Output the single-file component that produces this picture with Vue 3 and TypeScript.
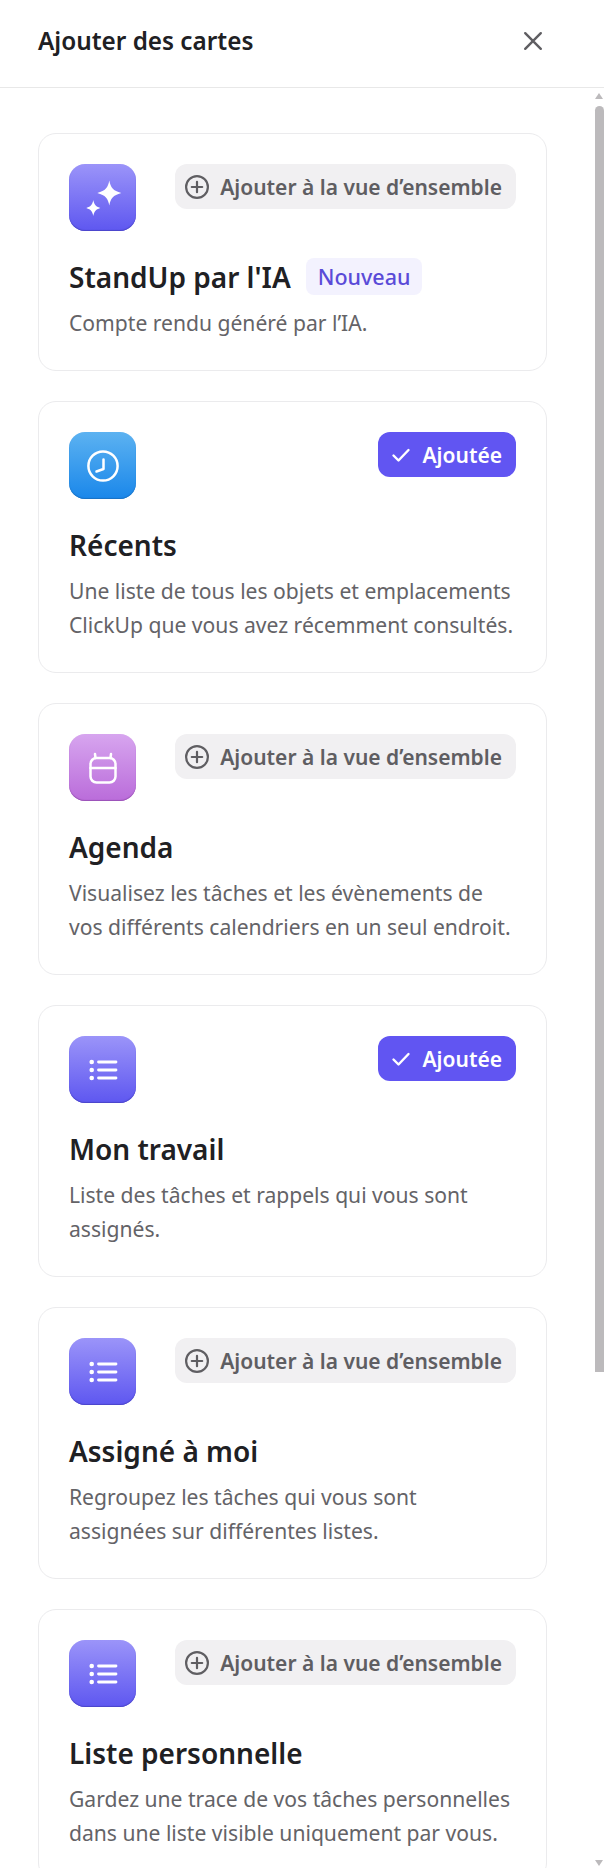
<template>
  <div class="panel">
    <header class="panel-head">
      <h1 class="panel-title">Ajouter des cartes</h1>
      <button class="close-btn" aria-label="Fermer">
        <svg width="24" height="24" viewBox="0 0 24 24" fill="none" stroke="#5f5e62" stroke-width="2.4" stroke-linecap="round">
          <path d="M4.2 4.2 19.8 19.8M19.8 4.2 4.2 19.8" />
        </svg>
      </button>
    </header>

    <div class="card-list">
      <article v-for="card in cards" :key="card.title" class="card">
        <div class="card-top">
          <div class="app-icon" :class="card.tone">
            <svg v-if="card.icon === 'spark'" width="40" height="40" viewBox="0 0 40 40" fill="#fff">
              <path d="M26.300 2.500c1.300 7 3.700 10.300 12 12.500-8.300 2.200-10.700 5.500-12 12.500-1.300-7-3.700-10.300-12-12.500 8.300-2.200 10.700-5.500 12-12.500Z" />
              <path d="M10.300 22c.8 4.300 2.200 6.400 7 8-4.800 1.600-6.200 3.700-7 8-.8-4.300-2.200-6.400-7-8 4.800-1.600 6.200-3.700 7-8Z" />
            </svg>
            <svg v-else-if="card.icon === 'clock'" width="34" height="34" viewBox="0 0 34 34" fill="none" stroke="#fff" stroke-width="2.500" stroke-linecap="round" stroke-linejoin="round">
              <circle cx="17" cy="17" r="14.600" />
              <path d="M17.500 10.500V20l-7 2.500" />
            </svg>
            <svg v-else-if="card.icon === 'calendar'" width="34" height="34" viewBox="0 0 34 34" fill="none" stroke="#fff" stroke-width="2.500" stroke-linecap="round" stroke-linejoin="round">
              <rect x="4.500" y="7" width="25" height="24.500" rx="6" />
              <path d="M4.500 17h25M9 3l.5 4M25 3l-.5 4" />
            </svg>
            <svg v-else width="34" height="34" viewBox="0 0 34 34" fill="none" stroke="#fff" stroke-width="2.800" stroke-linecap="round">
              <path d="M12.500 9h17.500M12.500 17h17.500M12.500 25h17.500" />
              <g fill="#fff" stroke="none">
                <circle cx="5.700" cy="9" r="2.300" />
                <circle cx="5.700" cy="17" r="2.300" />
                <circle cx="5.700" cy="25" r="2.300" />
              </g>
            </svg>
          </div>

          <button v-if="card.added" class="state-btn added">
            <svg width="22" height="22" viewBox="0 0 22 22" fill="none" stroke="#fff" stroke-width="2.400" stroke-linecap="round" stroke-linejoin="round">
              <path d="M3.500 11.500 8.500 16.500 18.500 6" />
            </svg>
            Ajoutée
          </button>
          <button v-else class="state-btn">
            <svg width="24" height="24" viewBox="0 0 24 24" fill="none" stroke="#5f5e62" stroke-width="2.200" stroke-linecap="round">
              <circle cx="12" cy="12" r="10.900" />
              <path d="M12 6.800v10.400M6.800 12h10.400" />
            </svg>
            Ajouter à la vue d’ensemble
          </button>
        </div>

        <div class="title-row">
          <h2 class="card-title">{{ card.title }}</h2>
          <span v-if="card.isNew" class="new-badge">Nouveau</span>
        </div>
        <p class="card-desc">{{ card.desc }}</p>
      </article>
    </div>

    <div class="scroll-arrow up"></div>
    <div class="scroll-thumb"></div>
    <div class="scroll-arrow down"></div>
  </div>
</template>

<script setup lang="ts">
type CardItem = {
  title: string
  desc: string
  icon: 'spark' | 'clock' | 'calendar' | 'list'
  tone: 'violet' | 'blue' | 'pink'
  added?: boolean
  isNew?: boolean
}

const cards: CardItem[] = [
  { title: "StandUp par l'IA", desc: 'Compte rendu généré par l’IA.', icon: 'spark', tone: 'violet', isNew: true },
  {
    title: 'Récents',
    desc: 'Une liste de tous les objets et emplacements ClickUp que vous avez récemment consultés.',
    icon: 'clock',
    tone: 'blue',
    added: true
  },
  {
    title: 'Agenda',
    desc: 'Visualisez les tâches et les évènements de vos différents calendriers en un seul endroit.',
    icon: 'calendar',
    tone: 'pink'
  },
  {
    title: 'Mon travail',
    desc: 'Liste des tâches et rappels qui vous sont assignés.',
    icon: 'list',
    tone: 'violet',
    added: true
  },
  {
    title: 'Assigné à moi',
    desc: 'Regroupez les tâches qui vous sont assignées sur différentes listes.',
    icon: 'list',
    tone: 'violet'
  },
  {
    title: 'Liste personnelle',
    desc: 'Gardez une trace de vos tâches personnelles dans une liste visible uniquement par vous.',
    icon: 'list',
    tone: 'violet'
  }
]
</script>

<style>
html, body { margin: 0; background: #fff; overflow: hidden; }
</style>

<style scoped>
.panel {
  position: relative;
  width: 604px;
  height: 1868px;
  overflow: hidden;
  background: #fff;
  font-family: "Noto Sans", "Open Sans", sans-serif;
}

.panel-head {
  display: flex;
  align-items: center;
  justify-content: space-between;
  box-sizing: border-box;
  height: 88px;
  padding: 0 59px 6px 38px;
  border-bottom: 1px solid #e8e8e8;
}
.panel-title {
  margin: 0;
  font-size: 24.300px;
  font-weight: 600;
  color: #202023;
}
.close-btn {
  display: flex;
  padding: 0;
  border: none;
  background: none;
}

.card-list {
  display: flex;
  flex-direction: column;
  gap: 30px;
  width: 509px;
  margin-left: 38px;
  padding-top: 45px;
}

.card {
  box-sizing: border-box;
  padding: 30px;
  border: 1px solid #ebebed;
  border-radius: 18px;
  background: #fff;
}
.card-top {
  display: flex;
  align-items: flex-start;
  justify-content: space-between;
}

.app-icon {
  display: flex;
  align-items: center;
  justify-content: center;
  width: 67px;
  height: 67px;
  border-radius: 16px;
}
.app-icon.violet {
  background: linear-gradient(#9b94f9, #5e57f0);
  box-shadow: inset 0 -1px 1px #4b45c9;
}
.app-icon.blue {
  background: linear-gradient(#5cb2f1, #1a87ea);
  box-shadow: inset 0 -1px 1px #1a72c4;
}
.app-icon.pink {
  background: linear-gradient(#d7a5ef, #ba6cda);
  box-shadow: inset 0 -1px 1px #9a52b6;
}

.state-btn {
  display: flex;
  align-items: center;
  gap: 11px;
  height: 45px;
  padding: 0 14px 0 10px;
  border: none;
  border-radius: 12px;
  background: #f1f0f2;
  color: #5f5e62;
  font-family: inherit;
  font-size: 21px;
  font-weight: 600;
  white-space: nowrap;
}
.state-btn.added {
  gap: 10px;
  padding: 0 14px 0 12px;
  background: #6155f2;
  color: #fff;
}

.title-row {
  display: flex;
  align-items: center;
  gap: 15px;
  height: 37px;
  margin-top: 27px;
}
.card-title {
  margin: 0;
  font-size: 28px;
  font-weight: 600;
  color: #202023;
}
.new-badge {
  display: flex;
  align-items: center;
  height: 37px;
  padding: 0 12px;
  border-radius: 8px;
  background: #f3f2fe;
  color: #5a4bd8;
  font-size: 21.500px;
  font-weight: 500;
}

.card-desc {
  margin: 11px 0 0;
  font-size: 21.100px;
  line-height: 34px;
  color: #646367;
}

.scroll-thumb {
  position: absolute;
  top: 106px;
  left: 595px;
  width: 9px;
  height: 1266px;
  border-radius: 5px 5px 0 0;
  background: #bcbabc;
}
.scroll-arrow {
  position: absolute;
  left: 595px;
  width: 0;
  height: 0;
  border-left: 4.500px solid transparent;
  border-right: 4.500px solid transparent;
}
.scroll-arrow.up {
  top: 93px;
  border-bottom: 6px solid #bcbabc;
}
.scroll-arrow.down {
  top: 1860px;
  border-top: 6px solid #bcbabc;
}
</style>
